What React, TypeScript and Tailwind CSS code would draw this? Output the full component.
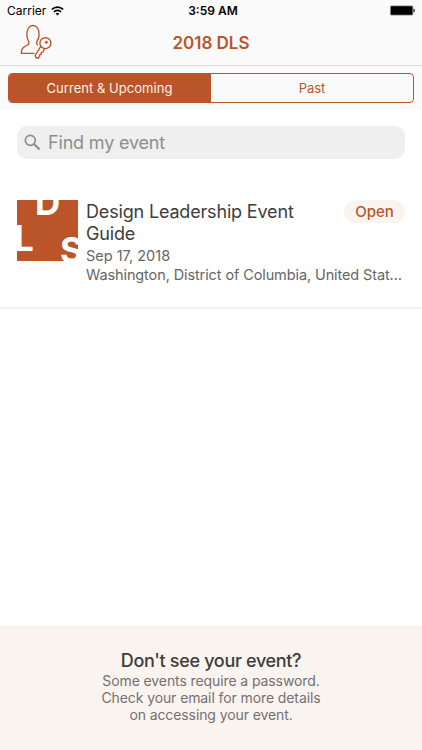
import React from 'react';

interface EventItem {
  title: string;
  date: string;
  location: string;
}

const events: EventItem[] = [
  {
    title: 'Design Leadership Event Guide',
    date: 'Sep 17, 2018',
    location: 'Washington, District of Columbia, United States',
  },
];

const StatusBar: React.FC = () => (
  <div className="grid h-[22px] grid-cols-3 items-center px-[7px] text-[12px] leading-[22px] text-black">
    <div className="flex items-center gap-[5px]">
      <span>Carrier</span>
      <svg width="13" height="10" viewBox="0 0 13 10" fill="none" stroke="#000" strokeWidth="1.7">
        <path d="M0.8 3.5a8.2 8.2 0 0 1 11.4 0" />
        <path d="M2.9 5.9a5.1 5.1 0 0 1 7.2 0" />
        <path d="M6.5 9.6L4.6 7.6a2.8 2.8 0 0 1 3.8 0z" fill="#000" stroke="none" />
      </svg>
    </div>
    <span className="pl-[4px] text-center font-semibold">3:59 AM</span>
    <svg className="mb-px justify-self-end" width="25" height="11" viewBox="0 0 25 11">
      <rect x="0.4" y="0.9" width="22.4" height="9.2" rx="1" fill="#000" stroke="#888" strokeWidth="0.8" />
      <path d="M23.4 3.8h.4a1 1 0 0 1 1 1v1.4a1 1 0 0 1-1 1h-.4z" fill="#333" />
    </svg>
  </div>
);

const AccountKeyIcon: React.FC = () => (
  <svg width="32" height="37" viewBox="0 0 32 37" fill="none" stroke="#bb5529" strokeWidth="1.35" strokeLinecap="round" strokeLinejoin="round">
    <path d="M14 30.300H1.300c0-3.700.6-5.200 3.300-6.700 2.700-1.400 4.400-1.900 4.400-3.700 0-1.500-2.100-3.400-2.100-8.200C6.900 6.400 9.100 2.500 13 2.500s6.100 3.900 6.100 9.200c0 4.400-2.500 6.200-2.500 8.100 0 .9.200 1.400.7 1.900" />
    <circle cx="25.400" cy="20.200" r="5.500" />
    <circle cx="26.300" cy="19.300" r="1.100" fill="#bb5529" strokeWidth="0.8" />
    <path d="M20.800 23.300l-5.500 8.900.4 2.300 2.300.8 1.700-1.900-.2-1.500 1.700-.5.100-1.700 1.700-.8 1.500-3.400" />
  </svg>
);

const SearchIcon: React.FC = () => (
  <svg width="17" height="17" viewBox="0 0 17 17" fill="none" stroke="#8e8e8e" strokeWidth="1.7">
    <circle cx="6.300" cy="6.300" r="5" />
    <path d="M10 10l5.500 5.500" strokeWidth="2.100" />
  </svg>
);

const EventLogo: React.FC = () => (
  <div className="relative size-[61px] shrink-0 overflow-hidden bg-[#bb5529] text-[35px] leading-[34px] font-bold text-white">
    <span className="absolute top-[-15px] left-[18px]">D</span>
    <span className="absolute top-[21px] left-[-3px]">L</span>
    <span className="absolute top-[33px] left-[43px]">S</span>
  </div>
);

const App: React.FC = () => {
  return (
    <div className="flex h-[750px] w-[422px] flex-col overflow-hidden bg-white font-['Inter',sans-serif]">
      <header className="h-[66px] border-b border-[#dadadc] bg-[#fafafa]">
        <StatusBar />
        <div className="grid h-[43px] grid-cols-[60px_1fr_60px] items-center">
          <button className="pb-[5px] pl-5">
            <AccountKeyIcon />
          </button>
          <h1 className="text-center text-[17px] font-semibold text-[#bb5529]">2018 DLS</h1>
        </div>
      </header>

      {/* Segmented control */}
      <div className="h-[44px] bg-[#fafafa] px-2 pt-[7px]">
        <div className="grid h-[30px] grid-cols-2 overflow-hidden rounded-[4px] border border-[#bb5529] text-[13px]">
          <button className="bg-[#bb5529] pt-px pr-px tracking-[0.04px] text-[#fdf0e8]">Current &amp; Upcoming</button>
          <button className="pt-px text-[#bb5529]">Past</button>
        </div>
      </div>

      <div className="mx-[17px] mt-4 flex h-[33px] items-center gap-[7px] rounded-[10px] bg-[#efefef] pl-[7px]">
        <SearchIcon />
        <span className="text-[18px] tracking-[-0.18px] text-[#8e8e8e]">Find my event</span>
      </div>

      {events.map((event) => (
        <div key={event.title} className="mt-[41px] flex h-[109px] gap-2 border-b-2 border-[#f1f1f1] px-[17px]">
          <EventLogo />
          <div className="min-w-0 flex-1">
            <div className="flex items-start justify-between">
              <h2 className="w-[230px] pt-px text-[18px] leading-[22px] tracking-[-0.17px] text-[#3d3d3d]">{event.title}</h2>
              <span className="h-[23px] w-[61px] rounded-full bg-[#faf4f0] text-center text-[15px] leading-[23px] font-medium text-[#bb5529]">
                Open
              </span>
            </div>
            <p className="mt-[2px] text-[14.5px] leading-[18px] text-[#666]">{event.date}</p>
            <p className="mt-px truncate text-[14.5px] leading-[18px] tracking-[-0.11px] text-[#666]">{event.location}</p>
          </div>
        </div>
      ))}

      <footer className="mt-auto h-[124px] bg-[#faf4f0] pt-[24px] text-center">
        <h3 className="text-[18px] leading-[22px] font-medium tracking-[-0.33px] text-[#3d3d3d]">Don't see your event?</h3>
        <p className="text-[14px] leading-[17px] tracking-[-0.1px] text-[#747170]">
          Some events require a password.
          <br />
          Check your email for more details
          <br />
          on accessing your event.
        </p>
      </footer>
    </div>
  );
};

export default App;
